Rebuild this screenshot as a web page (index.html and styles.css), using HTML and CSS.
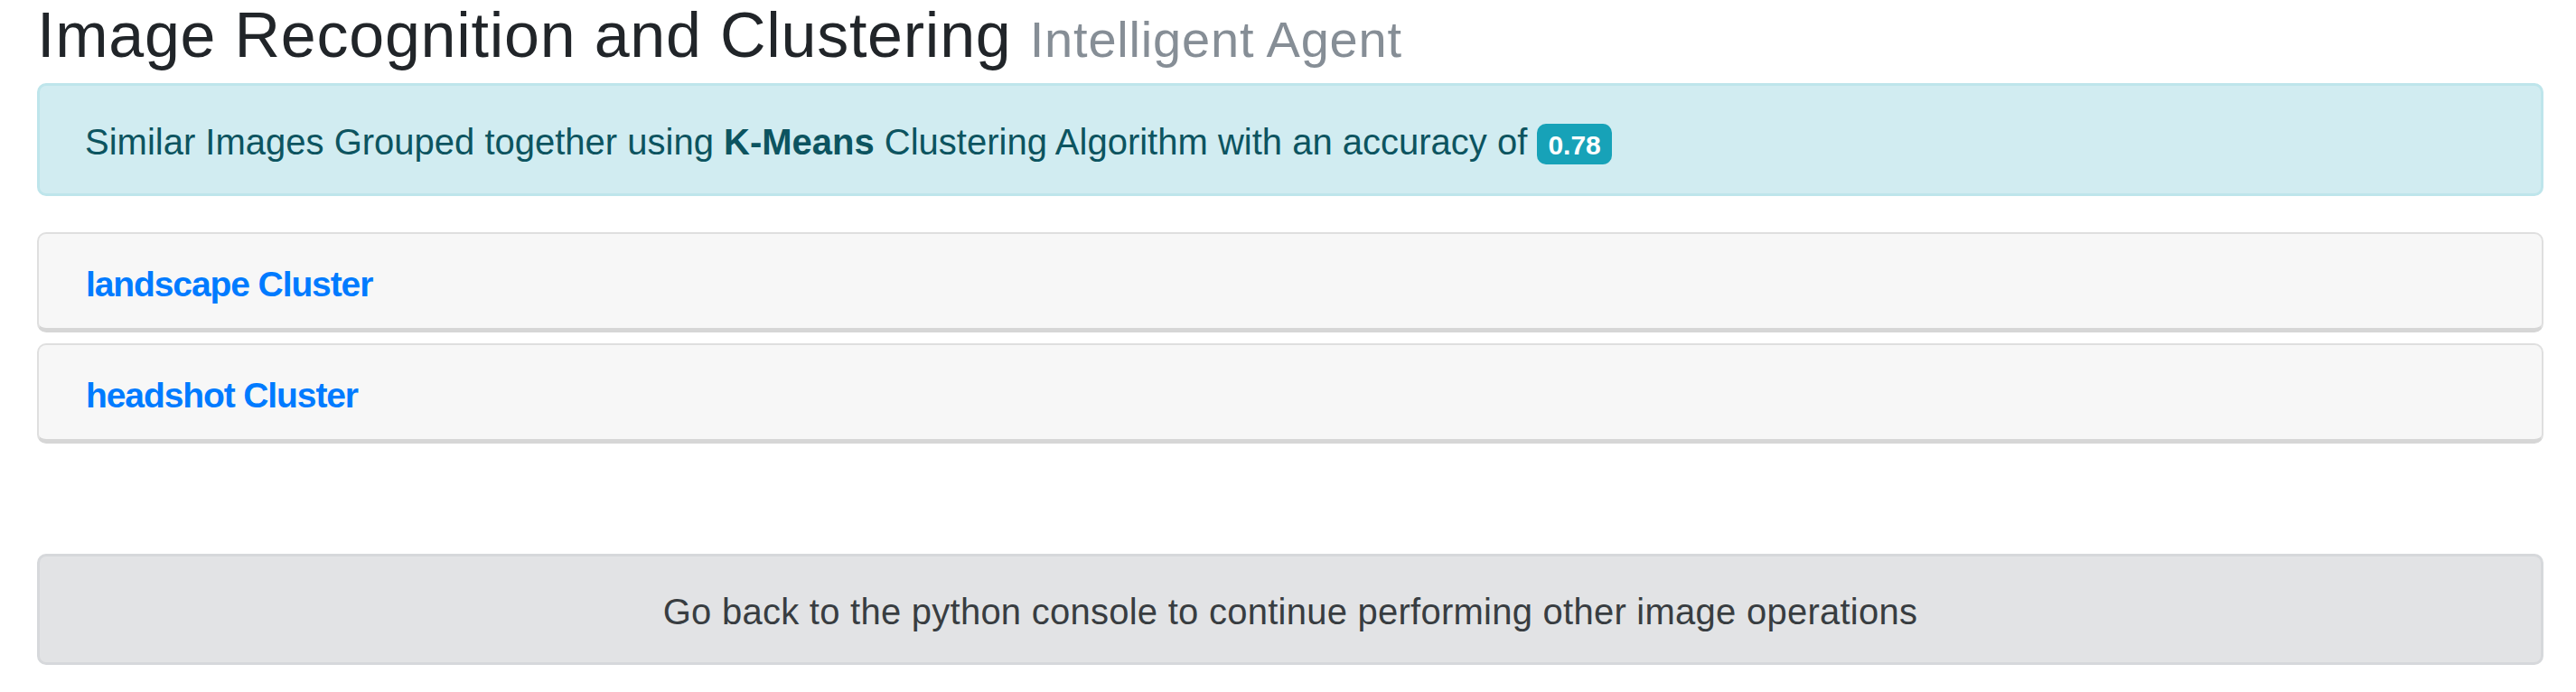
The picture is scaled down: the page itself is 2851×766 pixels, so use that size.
FILE: index.html
```html
<!DOCTYPE html>
<html lang="en">
<head>
<meta charset="utf-8">
<title>Image Recognition and Clustering</title>
<link rel="stylesheet" href="styles.css">
</head>
<body>
<div class="page">
  <h1 class="title">Image Recognition and Clustering <small class="subtitle">Intelligent Agent</small></h1>
  <div class="alert alert-info">Similar Images Grouped together using <b class="strong">K-Means</b> Clustering Algorithm with an accuracy of <span class="badge">0.78</span></div>
  <div class="cluster-list">
    <div class="card"><a class="card-link" href="#">landscape Cluster</a></div>
    <div class="card"><a class="card-link" href="#">headshot Cluster</a></div>
  </div>
  <div class="alert alert-secondary">Go back to the python console to continue performing other image operations</div>
</div>
</body>
</html>
```

FILE: styles.css
```css
html, body {
  margin: 0;
  padding: 0;
  background: #ffffff;
}

body {
  font-family: "Liberation Sans", Arial, sans-serif;
  font-size: 40px;
  line-height: 60px;
  color: #212529;
}

.page {
  padding: 0 36px 0 41px;
}

.title {
  margin: 0 0 14px;
  height: 78px;
  font-size: 70px;
  line-height: 78px;
  font-weight: 400;
  letter-spacing: 0.75px;
  color: #212529;
  white-space: nowrap;
}

.subtitle {
  font-size: 56px;
  line-height: 56px;
  letter-spacing: 0.8px;
  color: #868e96;
  margin-left: 0;
}

.alert {
  border: 3px solid transparent;
  border-radius: 10px;
}

.alert-info {
  background: #d1ecf1;
  border-color: #bee5eb;
  color: #0c5460;
  padding: 32px 50px 27px;
}

.strong {
  font-weight: 700;
}

.badge {
  display: inline-block;
  background: #17a2b8;
  color: #ffffff;
  font-size: 30px;
  font-weight: 700;
  line-height: 30px;
  letter-spacing: 0;
  padding: 9px 12px 6px;
  border-radius: 10px;
  vertical-align: baseline;
}

.cluster-list {
  margin-top: 40px;
  display: flex;
  flex-direction: column;
  gap: 12px;
}

.card {
  background: #f7f7f7;
  border: 2px solid #dfdfdf;
  border-bottom: 5px solid #d6d6d6;
  border-radius: 10px;
  padding: 25px 52px 18px;
}

.card-link {
  color: #007bff;
  text-decoration: none;
  font-size: 39px;
  font-weight: 700;
  letter-spacing: -1.1px;
}

.alert-secondary {
  margin-top: 122px;
  background: #e2e3e5;
  border-color: #d6d8db;
  color: #383d41;
  padding: 31px 50px 26px;
  text-align: center;
  letter-spacing: 0.25px;
}
```
